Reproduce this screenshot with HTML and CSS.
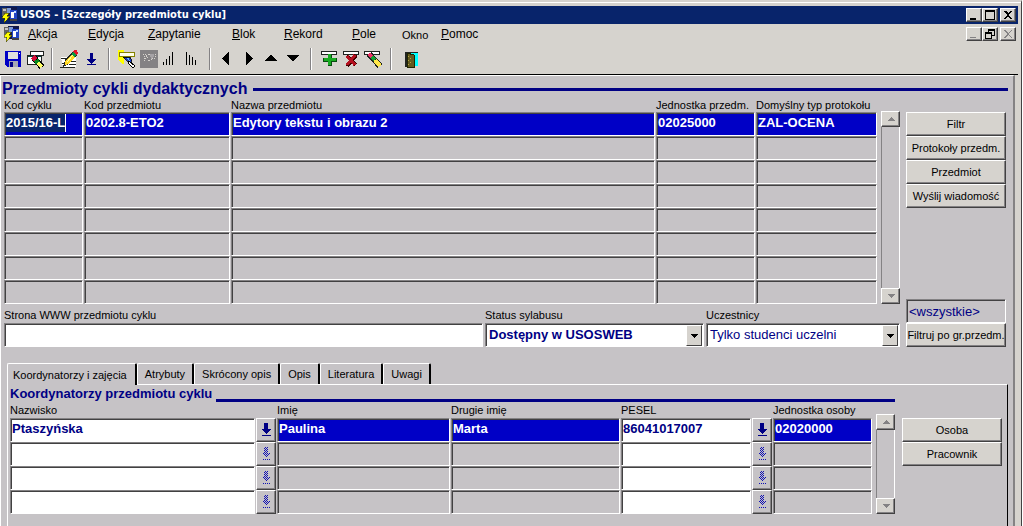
FILE: index.html
```html
<!DOCTYPE html>
<html lang="pl">
<head>
<meta charset="utf-8">
<title>USOS - [Szczegóły przedmiotu cyklu]</title>
<link rel="stylesheet" href="styles.css">
</head>
<body>
<svg class="defs" aria-hidden="true">
  <defs>
    <pattern id="dither" width="2" height="2" patternUnits="userSpaceOnUse"><rect width="1" height="1" fill="#1010b5"/><rect x="1" y="1" width="1" height="1" fill="#1010b5"/></pattern>
  </defs>
  <symbol id="app" viewBox="0 0 16 16"><rect x="4" width="11" height="13" fill="#10184a"/><rect x="5" y="1" width="4" height="5" fill="#7b9ad6"/><rect x="8" y="3" width="7" height="9" fill="#2145c6"/><path d="M9 5h3v6H9z" fill="#fff"/><path d="M12 4h2v2h-2z" fill="#c6dfff"/><rect y="1" width="5" height="8" fill="#636563"/><path d="M1 2h3v2H1z" fill="#c6c3c6"/><path d="M3 6h4L5 9h3l-6 7 1-5H0z" fill="#ff0" stroke="#424100" stroke-width=".6"/><path d="M8 12h7v2H8z" fill="#424142"/></symbol>
  <symbol id="down" viewBox="0 0 10 14"><path d="M3 0h4v6h3L5 11 0 6h3zM1 12h9v1H1z"/></symbol>
  <symbol id="tri-up" viewBox="0 0 8 4"><path d="M0 4l4-4 4 4z"/></symbol>
  <symbol id="tri-down" viewBox="0 0 8 4"><path d="M0 0h8L4 4z"/></symbol>
</svg>
<div class="window">
  <header class="titlebar">
    <svg class="app-icon" aria-hidden="true"><use href="#app"/></svg>
    <h1 class="title">USOS - [Szczegóły przedmiotu cyklu]</h1>
    <div class="controls">
      <button class="control" aria-label="Minimalizuj"><svg viewBox="0 0 12 10"><path d="M2 8h6v2H2z"/></svg></button>
      <button class="control" aria-label="Maksymalizuj"><svg viewBox="0 0 12 10"><path d="M1 0h10v10H1zM2 2v7h8V2z" fill-rule="evenodd"/></svg></button>
      <button class="control control-close" aria-label="Zamknij"><svg viewBox="0 0 12 10"><path d="M2 1h2l2 2 2-2h2L7 5l3 4H8L6 6 4 9H2l3-4z"/></svg></button>
    </div>
  </header>
  <div class="menubar">
    <svg class="app-icon" aria-hidden="true"><use href="#app"/></svg>
    <nav class="menu">
      <button class="menu-item"><u>A</u>kcja</button>
      <button class="menu-item"><u>E</u>dycja</button>
      <button class="menu-item"><u>Z</u>apytanie</button>
      <button class="menu-item"><u>B</u>lok</button>
      <button class="menu-item"><u>R</u>ekord</button>
      <button class="menu-item"><u>P</u>ole</button>
      <button class="menu-item menu-small">Okno</button>
      <button class="menu-item"><u>P</u>omoc</button>
    </nav>
    <div class="controls">
      <button class="control control-off" aria-label="Minimalizuj okno"><svg viewBox="0 0 12 10"><path d="M2 8h6v1H2z"/></svg></button>
      <button class="control" aria-label="Przywróć okno"><svg viewBox="0 0 12 10"><path d="M4 0h7v7H8v3H1V3h3zM5 2v1h3v3h2V2zM2 5v4h5V5z" fill-rule="evenodd"/></svg></button>
      <button class="control control-close control-off" aria-label="Zamknij okno"><svg viewBox="0 0 12 10"><path d="M2 1h1l3 3 3-3h1L7 5l3 4H9L6 6 3 9H2l3-4z"/></svg></button>
    </div>
  </div>
  <div class="toolbar">
    <button class="tool" aria-label="Zapisz"><svg viewBox="0 0 20 20"><path d="M2 2h16v16H4l-2-2z" fill="#0000c6"/><path d="M5 3h10v7H5z" fill="#dedfde"/><path d="M16 4h1v1h-1z" fill="#fff"/><path d="M6 12h9v6H6z" fill="#a5a6b5"/><path d="M7 13h3v5H7z" fill="#000084"/></svg></button>
    <button class="tool" aria-label="Wyczyść formularz"><svg viewBox="0 0 20 20"><path d="M5 2h13v4H5z" fill="#fff" stroke="#212421"/><path d="M2.500 6.500h14v9h-14z" fill="#fff" stroke="#212421"/><path d="M3 7h13v1H3z" fill="#084542"/><path d="M9 9l8 9" stroke="#000" stroke-width="6"/><path d="M8 8l3 3" stroke="#d61039" stroke-width="5"/><path d="M11 11l2 3" stroke="#088a21" stroke-width="5"/><path d="M13 14l4 4" stroke="#ff6" stroke-width="4"/></svg></button>
    <span class="sep"></span>
    <button class="tool" aria-label="Edytuj"><svg viewBox="0 0 20 20"><path d="M2 8h15v10H4z" fill="#fff"/><path d="M1 18h15M3 14h4M10 15h7M2 9h7M12 12h5" stroke="#212421"/><path d="M4 18l2-7 8-9 4 4-8 9z" fill="#212421"/><path d="M6 13l7-8 3 3-7 7-3 1z" fill="#ffd721"/><path d="M8 13l6-7" stroke="#ff9" stroke-width="1"/><path d="M12 5l2-2 3 3-2 2z" fill="#089a42"/><path d="M14 3l1-2h3l1 3-2 2z" fill="#e71029"/></svg></button>
    <button class="tool" aria-label="Lista wartości"><svg viewBox="0 0 20 20"><path d="M9 4h3v6h3l-4.500 5L6 10h3zM6 15h9v1H6z" fill="#000084"/></svg></button>
    <span class="sep sep-wide"></span>
    <button class="tool" aria-label="Wprowadź zapytanie"><svg viewBox="0 0 20 20"><path d="M1 1h6v14H5l-4-5z" fill="#ff0"/><path d="M2.500 3.500h15v4h-15z" fill="#ffffe7" stroke="#848200"/><path d="M6 8h7l2 4-3 2z" fill="#183cc6" stroke="#000" stroke-width=".8"/><path d="M9 9h3l1 3z" fill="#6bf"/><path d="M12 12l6 5-2 2-5-5z" fill="#fff" stroke="#000"/></svg></button>
    <button class="tool" aria-label="Wykonaj zapytanie" disabled><svg viewBox="0 0 20 20"><path d="M1 1h18v18H1z" fill="#848284"/><path d="M4 5h3v1h2V5h7v4h-2l-2 2H9l2 2M5 7h3v2H5v2h2" fill="none" stroke="#d6d3ce" stroke-dasharray="1 1"/><path d="M11 5h4v3l-3 2z" fill="#a5a2a5"/></svg></button>
    <button class="tool" aria-label="Sortuj rosnąco"><svg viewBox="0 0 20 20"><path d="M2 13h1v3H2zM5 10h1v6H5zM8 7h1v9H8zM11 3h1v13h-1z"/></svg></button>
    <button class="tool" aria-label="Sortuj malejąco"><svg viewBox="0 0 20 20"><path d="M3 3h1v13H3zM6 6h1v10H6zM9 8h1v8H9zM12 11h1v5h-1z"/></svg></button>
    <span class="sep"></span>
    <button class="tool" aria-label="Poprzedni blok"><svg viewBox="0 0 20 20"><path d="M12 3v13L5 9.500z"/></svg></button>
    <button class="tool" aria-label="Następny blok"><svg viewBox="0 0 20 20"><path d="M7 3v13l7-6.500z"/></svg></button>
    <button class="tool" aria-label="Poprzedni rekord"><svg viewBox="0 0 20 20"><path d="M3 12l6-6h1l6 6z"/></svg></button>
    <button class="tool" aria-label="Następny rekord"><svg viewBox="0 0 20 20"><path d="M3 6h13l-6 6H9z"/></svg></button>
    <span class="sep sep-wide"></span>
    <button class="tool" aria-label="Dodaj rekord"><svg viewBox="0 0 20 20"><path d="M2.500 2.500h15v3h-15z" fill="#fff" stroke="#212421"/><path d="M9 5h4v4h5v4h-5v4H9v-4H4V9h5z" fill="#084d10"/><path d="M9 5h3v4h5v3h-5v4H9v-4H5V9h4z" fill="#18aa21"/></svg></button>
    <button class="tool" aria-label="Usuń rekord"><svg viewBox="0 0 20 20"><path d="M2.500 2.500h15v3h-15z" fill="#fff" stroke="#212421"/><path d="M6 7l9 9M15 6L6 17" stroke="#420000" stroke-width="4"/><path d="M6 7l8 9M14 6L6 16" stroke="#b5101f" stroke-width="3"/></svg></button>
    <button class="tool" aria-label="Wyczyść rekord"><svg viewBox="0 0 20 20"><path d="M1.500 2.500h15v3h-15z" fill="#fff" stroke="#212421"/><path d="M6 5l11 12" stroke="#212421" stroke-width="6"/><path d="M6 5l4 4" stroke="#ef3163" stroke-width="4"/><path d="M9 8l3 3" stroke="#10a231" stroke-width="4"/><path d="M12 11l5 6" stroke="#ffe74a" stroke-width="4"/></svg></button>
    <span class="sep sep-last"></span>
    <button class="tool" aria-label="Wyjście"><svg viewBox="0 0 20 20"><path d="M5 3h12v14H5z" fill="#0ff"/><path d="M5 3h12v1H5zM4 3h2v15H4z" fill="#212421"/><path d="M6 4l7 2v12H6z" fill="#63591f" stroke="#212400"/><path d="M7 7h1v1H7zm2 2h1v1H9zm-2 2h1v1H7zm2 2h1v1H9zm-2 2h1v1H7z" fill="#b5a642"/></svg></button>
  </div>

  <main class="content">
    <h2 class="heading">Przedmioty cykli dydaktycznych</h2>
    <section class="upper">
      <div class="records">
        <div class="with-scroll">
          <table class="grid">
            <colgroup><col class="c-cycle"><col class="c-code"><col><col class="c-unit"><col class="c-type"></colgroup>
            <thead><tr><th>Kod cyklu</th><th>Kod przedmiotu</th><th>Nazwa przedmiotu</th><th>Jednostka przedm.</th><th>Domyślny typ protokołu</th></tr></thead>
            <tbody>
              <tr class="current"><td><input class="cell-input editing" aria-label="Kod cyklu" value="2015/16-L"></td><td>0202.8-ETO2</td><td>Edytory tekstu i obrazu 2</td><td>02025000</td><td>ZAL-OCENA</td></tr>
              <tr><td></td><td></td><td></td><td></td><td></td></tr>
              <tr><td></td><td></td><td></td><td></td><td></td></tr>
              <tr><td></td><td></td><td></td><td></td><td></td></tr>
              <tr><td></td><td></td><td></td><td></td><td></td></tr>
              <tr><td></td><td></td><td></td><td></td><td></td></tr>
              <tr><td></td><td></td><td></td><td></td><td></td></tr>
              <tr><td></td><td></td><td></td><td></td><td></td></tr>
            </tbody>
          </table>
          <div class="scroll">
            <button class="scroll-btn" aria-label="W górę"><svg><use href="#tri-up"/></svg></button>
            <button class="scroll-btn" aria-label="W dół"><svg><use href="#tri-down"/></svg></button>
          </div>
        </div>
        <div class="fields">
          <div class="field field-www">
            <label for="www">Strona WWW przedmiotu cyklu</label>
            <input id="www" class="box" type="text">
          </div>
          <div class="field field-status">
            <label for="status">Status sylabusu</label>
            <div class="drop"><select id="status" class="box strong"><option>Dostępny w USOSWEB</option></select><span class="drop-btn"><svg><use href="#tri-down"/></svg></span></div>
          </div>
          <div class="field field-who">
            <label for="who">Uczestnicy</label>
            <div class="drop"><select id="who" class="box"><option>Tylko studenci uczelni</option></select><span class="drop-btn"><svg><use href="#tri-down"/></svg></span></div>
          </div>
        </div>
      </div>
      <div class="side">
        <button class="btn">Filtr</button>
        <button class="btn">Protokoły przedm.</button>
        <button class="btn">Przedmiot</button>
        <button class="btn">Wyślij wiadomość</button>
        <input class="box box-grey" aria-label="Grupa przedmiotów" value="&lt;wszystkie&gt;">
        <button class="btn">Filtruj po gr.przedm.</button>
      </div>
    </section>

    <div class="tabs" role="tablist">
      <button class="tab tab-active" role="tab" aria-selected="true">Koordynatorzy i zajęcia</button>
      <button class="tab" role="tab">Atrybuty</button>
      <button class="tab" role="tab">Skrócony opis</button>
      <button class="tab" role="tab">Opis</button>
      <button class="tab" role="tab">Literatura</button>
      <button class="tab" role="tab">Uwagi</button>
    </div>
    <section class="panel" role="tabpanel">
      <div class="people">
        <h3 class="heading subheading">Koordynatorzy przedmiotu cyklu</h3>
        <div class="with-scroll">
          <table class="grid">
            <colgroup><col><col class="c-pick"><col class="c-first"><col class="c-second"><col class="c-pesel"><col class="c-pick"><col class="c-unit"></colgroup>
            <thead><tr><th>Nazwisko</th><th></th><th>Imię</th><th>Drugie imię</th><th>PESEL</th><th></th><th>Jednostka osoby</th></tr></thead>
            <tbody>
              <tr class="current"><td class="edit"><input class="cell-input" aria-label="Nazwisko 1" value="Ptaszyńska"></td><td class="pick"><button class="pick-btn" aria-label="Wybierz osobę"><svg><use href="#down"/></svg></button></td><td>Paulina</td><td>Marta</td><td class="edit"><input class="cell-input" aria-label="PESEL 1" value="86041017007"></td><td class="pick"><button class="pick-btn" aria-label="Wybierz PESEL"><svg><use href="#down"/></svg></button></td><td>02020000</td></tr>
              <tr><td class="edit"><input class="cell-input" aria-label="Nazwisko 2"></td><td class="pick"><button class="pick-btn" disabled aria-label="Wybierz osobę"><svg><use href="#down"/></svg></button></td><td></td><td></td><td class="edit"><input class="cell-input" aria-label="PESEL 2"></td><td class="pick"><button class="pick-btn" disabled aria-label="Wybierz PESEL"><svg><use href="#down"/></svg></button></td><td></td></tr>
              <tr><td class="edit"><input class="cell-input" aria-label="Nazwisko 3"></td><td class="pick"><button class="pick-btn" disabled aria-label="Wybierz osobę"><svg><use href="#down"/></svg></button></td><td></td><td></td><td class="edit"><input class="cell-input" aria-label="PESEL 3"></td><td class="pick"><button class="pick-btn" disabled aria-label="Wybierz PESEL"><svg><use href="#down"/></svg></button></td><td></td></tr>
              <tr><td class="edit"><input class="cell-input" aria-label="Nazwisko 4"></td><td class="pick"><button class="pick-btn" disabled aria-label="Wybierz osobę"><svg><use href="#down"/></svg></button></td><td></td><td></td><td class="edit"><input class="cell-input" aria-label="PESEL 4"></td><td class="pick"><button class="pick-btn" disabled aria-label="Wybierz PESEL"><svg><use href="#down"/></svg></button></td><td></td></tr>
            </tbody>
          </table>
          <div class="scroll">
            <button class="scroll-btn" aria-label="W górę"><svg><use href="#tri-up"/></svg></button>
            <button class="scroll-btn" aria-label="W dół"><svg><use href="#tri-down"/></svg></button>
          </div>
        </div>
      </div>
      <div class="side side-people">
        <button class="btn">Osoba</button>
        <button class="btn">Pracownik</button>
      </div>
    </section>
  </main>
</div>
</body>
</html>
```

FILE: styles.css
```css
* { box-sizing: border-box; }

body {
  margin: 0;
  background: #fff;
  color: #000;
  font: 11px/14px "Liberation Sans", Arial, sans-serif;
}

button, input, select {
  margin: 0;
  padding: 0;
  border: 0;
  border-radius: 0;
  background: none;
  color: inherit;
  font: inherit;
  appearance: none;
}

svg { display: block; shape-rendering: crispEdges; }
.defs { position: absolute; width: 0; height: 0; }

.window {
  display: flex;
  flex-direction: column;
  min-height: 100vh;
  margin-right: 1px;
  padding: 4px 3px 0 0;
  border-top: 2px solid #d6d3ce;
  border-right: 1px solid #424142;
  background: #d6d3ce;
  box-shadow: inset 0 1px #fff;
}

/* Title and menu bars */
.titlebar, .menubar { display: flex; align-items: center; padding-right: 2px; }
.titlebar { height: 18px; padding-left: 2px; gap: 2px; background: #08246b; color: #fff; }
.title { flex: 1; margin: 0; font: bold 11px/18px "DejaVu Sans Condensed", "DejaVu Sans", sans-serif; }
.app-icon { width: 16px; height: 16px; }
.menubar { height: 19px; padding-left: 4px; }
.menu {
  display: grid;
  flex: 1;
  grid-template-columns: 60px 60px 84px 52px 68px 50px 39px auto;
  align-items: center;
  padding-left: 8px;
  font-size: 12px;
}
.menu-item { justify-self: start; }
.menu-small { padding-top: 2px; font-size: 11px; }

.controls { display: flex; }
.control {
  display: grid;
  place-items: center;
  width: 16px;
  height: 14px;
  border: 1px solid;
  border-color: #fff #424142 #424142 #fff;
  box-shadow: inset -1px -1px #848284;
  background: #d6d3ce;
}
.control svg { width: 12px; height: 10px; }
.control-close { margin-left: 2px; }
.control-off { fill: #848284; }

.toolbar {
  display: flex;
  align-items: center;
  height: 32px;
  padding-left: 2px;
  border-bottom: 1px solid #000;
}
.tool { display: grid; place-items: center; width: 22px; height: 22px; }
.tool svg { width: 20px; height: 20px; }
.sep {
  width: 2px;
  height: 22px;
  margin: 0 5px;
  border-left: 1px solid #848284;
  border-right: 1px solid #fff;
}
.sep-wide { margin: 0 6px; }
.sep-last { margin: 0 8px 0 6px; }

/* Form canvas */
.content {
  display: flex;
  flex: 1;
  flex-direction: column;
  margin-right: 3px;
  padding: 3px 5px 0 0;
  border-top: 1px solid #fff;
  border-left: 1px solid #fff;
  border-right: 2px solid #848284;
  background: #c6c3c6;
}
.heading {
  display: flex;
  align-items: center;
  gap: 6px;
  margin: 0;
  padding-left: 1px;
  color: #000084;
  font-size: 16px;
  line-height: 20px;
}
.heading::after { content: ""; flex: 1; height: 3px; background: #000084; }
.subheading { align-items: flex-end; gap: 4px; font-size: 13px; line-height: 16px; }

.upper { display: flex; gap: 6px; padding: 0 2px; }
.records { flex: 1; min-width: 0; }
.with-scroll { display: flex; gap: 3px; }

.grid { flex: 1; width: 100%; table-layout: fixed; border-collapse: separate; border-spacing: 1px 0; }
.c-cycle { width: 79px; }
.c-code { width: 146px; }
.c-unit { width: 99px; }
.c-type { width: 121px; }
.c-pick { width: 20px; }
.c-first { width: 173px; }
.c-second { width: 169px; }
.c-pesel { width: 130px; }
.grid th { height: 13px; padding: 0; font-weight: normal; line-height: 13px; text-align: left; white-space: nowrap; }
.panel .grid th { height: 16px; line-height: 16px; }
.grid td, .box {
  border: 1px solid;
  border-color: #848284 #fff #fff #848284;
  box-shadow: inset 1px 1px #424142;
}
.grid td { height: 24px; padding: 0 0 2px 1px; font-size: 13px; font-weight: bold; line-height: 18px; white-space: nowrap; }
.grid .current td { background-color: #0000c6; color: #fff; }
.grid td.edit, .grid .current td.edit { background-color: #fff; color: #000084; }
.cell-input { display: block; width: 100%; height: 18px; }
.editing { background: linear-gradient(90deg, #08246b 59px, #fff 59px, #fff 60px, transparent 60px); }
.grid td.pick, .grid .current td.pick { padding: 0; border: 0; box-shadow: none; background: none; }
.pick-btn {
  display: grid;
  place-items: center;
  width: 100%;
  height: 24px;
  border: 1px solid;
  border-color: #fff #424142 #424142 #fff;
  box-shadow: inset -1px -1px #848284;
  fill: #000084;
}
.pick-btn:disabled { fill: url(#dither) #000084; }
.pick-btn svg { width: 10px; height: 14px; }

.scroll {
  display: flex;
  flex-direction: column;
  justify-content: space-between;
  width: 19px;
  margin-top: 12px;
  border-left: 1px solid #848284;
  border-right: 1px solid #fff;
}
.scroll-btn {
  display: grid;
  place-items: center;
  width: 19px;
  height: 16px;
  margin-left: -1px;
  border: 1px solid;
  border-color: #fff #424142 #424142 #fff;
  box-shadow: inset -1px -1px #848284;
  background: #d6d3ce;
  fill: #848284;
}
.scroll-btn svg, .drop-btn svg { width: 8px; height: 4px; }

.fields { display: flex; gap: 2px; padding: 4px 0 0 1px; }
.field { display: grid; grid-template-rows: 15px 24px; }
.field-www { flex: 1; }
.field-status { width: 219px; }
.field-who { width: 194px; }
.box { width: 100%; height: 24px; padding-left: 3px; background: #fff; color: #000084; font-size: 13px; }
.strong { font-weight: bold; }
.box-grey { padding-left: 2px; margin-top: auto; background: #c6c3c6; }
.drop { display: grid; grid-template-columns: 1fr 18px; }
.drop > .box { grid-area: 1 / 1 / 2 / 3; }
.drop-btn {
  display: grid;
  grid-area: 1 / 2;
  place-items: center;
  margin: 2px 2px 1px 0;
  border: 1px solid;
  border-color: #fff #424142 #424142 #fff;
  background: #d6d3ce;
  pointer-events: none;
  z-index: 1;
}

.side { display: flex; flex-direction: column; width: 100px; padding-top: 13px; }
.btn {
  height: 24px;
  border: 1px solid;
  border-color: #fff #424142 #424142 #fff;
  box-shadow: inset -1px -1px #848284;
  background: #d6d3ce;
  white-space: nowrap;
}

/* Tabs */
.tabs { display: flex; align-items: flex-end; padding: 16px 0 0 6px; }
.tab {
  height: 21px;
  padding: 0 7px;
  border: 1px solid #fff;
  border-right: 2px solid #000;
  border-bottom: 0;
  border-radius: 2px 2px 0 0;
}
.tab-active { height: 22px; margin-bottom: -1px; padding: 0 8px 0 5px; background: #c6c3c6; z-index: 1; }
.panel {
  display: flex;
  flex: 1;
  gap: 7px;
  margin-left: 6px;
  padding: 1px 5px 0 1px;
  border-top: 1px solid #fff;
  border-left: 1px solid #fff;
  border-right: 1px solid #000;
}
.people { flex: 1; min-width: 0; }
.side-people { padding-top: 32px; }
```
